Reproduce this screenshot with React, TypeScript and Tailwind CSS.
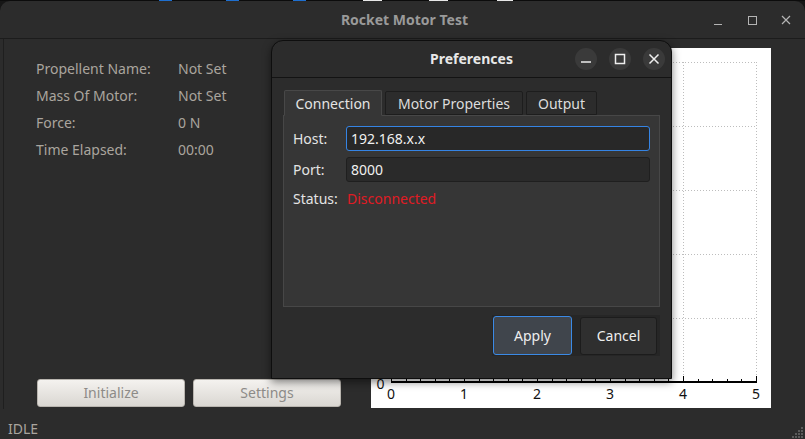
import React from "react";

function Chart() {
  const xs = [0, 1, 2, 3, 4, 5].map((i) => 20 + i * 73);
  const hs = [14, 78, 142, 206, 270];
  const minor: number[] = [];
  for (let i = 0; i < 5; i++) for (let j = 1; j < 5; j++) minor.push(20 + i * 73 + j * 14.6);
  return (
    <svg width="400" height="360" className="block">
      <rect width="400" height="360" fill="#ffffff" />
      {hs.map((y) => (
        <line key={"h" + y} x1={20} x2={386} y1={y + 0.5} y2={y + 0.5} stroke="#bdbdbd" strokeDasharray="1 2" />
      ))}
      {xs.map((x) => (
        <line key={"v" + x} x1={x + 0.5} x2={x + 0.5} y1={14} y2={333} stroke="#bdbdbd" strokeDasharray="1 2" />
      ))}
      <line x1={20.5} x2={20.5} y1={14} y2={335} stroke="#000" />
      <line x1={20} x2={386} y1={334} y2={334} stroke="#000" strokeWidth={2} />
      {xs.map((x) => (
        <line key={"t" + x} x1={x + 0.5} x2={x + 0.5} y1={328} y2={334} stroke="#000" />
      ))}
      {minor.map((x) => (
        <line key={"m" + x} x1={Math.round(x) + 0.5} x2={Math.round(x) + 0.5} y1={331} y2={334} stroke="#000" />
      ))}
      {xs.map((x, i) => (
        <text key={"l" + x} x={x} y={351} textAnchor="middle" fontSize="14" fill="#111" fontFamily="'Noto Sans', sans-serif">
          {i}
        </text>
      ))}
      <text x={9.5} y={341} textAnchor="middle" fontSize="14" fill="#111" fontFamily="'Noto Sans', sans-serif">
        0
      </text>
    </svg>
  );
}

export default function App() {
  const rows: [string, string][] = [
    ["Propellent Name:", "Not Set"],
    ["Mass Of Motor:", "Not Set"],
    ["Force:", "0 N"],
    ["Time Elapsed:", "00:00"],
  ];
  return (
    <div className="relative w-[805px] h-[439px] overflow-hidden bg-[#161616] font-['Noto_Sans',sans-serif] text-[14px] leading-[20px]">
      {/* desktop strip */}
      <div className="flex h-[1px] bg-[#0c0c0c]">
        <div className="w-[159px]" />
        <div className="w-[13px] bg-[#1e6fd0]" />
        <div className="w-[54px]" />
        <div className="w-[13px] bg-[#1e6fd0]" />
        <div className="w-[54px]" />
        <div className="w-[13px] bg-[#1e6fd0]" />
        <div className="w-[57px]" />
        <div className="w-[19px] bg-[#e8e8e8]" />
        <div className="w-[47px]" />
        <div className="w-[19px] bg-[#e8e8e8]" />
        <div className="w-[49px]" />
        <div className="w-[16px] bg-[#e8e8e8]" />
      </div>

      {/* main window */}
      <div className="flex flex-col h-[438px] rounded-t-[10px] bg-[#2c2c2c]">
        <div className="grid grid-cols-[1fr_auto_1fr] items-center h-[38px] border-b border-[#1c1c1c]">
          <div />
          <div className="font-bold text-[#9a9a9a] pl-[4px]">Rocket Motor Test</div>
          <div className="flex justify-end items-center gap-[18px] pr-[11px] text-[#b4b4b4]">
            <svg width="16" height="16" viewBox="0 0 16 16">
              <line x1="4" x2="12" y1="12.5" y2="12.5" stroke="currentColor" strokeWidth="1" />
            </svg>
            <svg width="16" height="16" viewBox="0 0 16 16">
              <rect x="4.5" y="4.5" width="8" height="8" fill="none" stroke="currentColor" strokeWidth="1" />
            </svg>
            <svg width="16" height="16" viewBox="0 0 16 16">
              <path d="M4 4 L12 12 M12 4 L4 12" stroke="currentColor" strokeWidth="1.2" />
            </svg>
          </div>
        </div>

        <div className="flex h-[370px] ml-[3px] border-l border-[#1f1f1f]">
          <div className="w-[367px] flex flex-col justify-between pt-[16px] pb-[2px] text-[#aaa59e]">
            <div className="pl-[32px]">
              {rows.map(([k, v]) => (
                <div key={k} className="flex items-center h-[27px]">
                  <div className="w-[142px]">{k}</div>
                  <div>{v}</div>
                </div>
              ))}
            </div>
            <div className="flex gap-[8px] pl-[33px]">
              <div className="w-[148px] h-[28px] rounded-[3px] border border-[#b9b5af] bg-linear-to-b from-[#f4f2ef] to-[#dad7d2] text-[#8d8b88] flex items-center justify-center">
                Initialize
              </div>
              <div className="w-[148px] h-[28px] rounded-[3px] border border-[#b9b5af] bg-linear-to-b from-[#f4f2ef] to-[#dad7d2] text-[#8d8b88] flex items-center justify-center">
                Settings
              </div>
            </div>
          </div>
          <div className="mt-[9px] w-[400px] h-[360px]">
            <Chart />
          </div>
        </div>

        <div className="flex-1 flex items-end pl-[8px] pb-0 text-[#aaa59e]">IDLE</div>
      </div>

      {/* resize grip */}
      <svg className="absolute right-[2px] bottom-[1px]" width="12" height="12" viewBox="0 0 12 12">
        {[
          [10, 1], [7, 4], [10, 4], [4, 7], [7, 7], [10, 7], [1, 10], [4, 10], [7, 10], [10, 10],
        ].map(([x, y]) => (
          <rect key={x + "-" + y} x={x} y={y} width="2" height="2" fill="#5a5a5a" />
        ))}
      </svg>

      {/* Preferences dialog */}
      <div className="absolute left-[271px] top-[40px] w-[401px] h-[339px] rounded-t-[12px] border border-[#0e0e0e] bg-[#2c2c2c] shadow-[0_3px_8px_rgba(0,0,0,0.5)] flex flex-col">
        <div className="grid grid-cols-[1fr_auto_1fr] items-center h-[37px] border-b border-[#131313] shrink-0">
          <div />
          <div className="font-bold text-[#e8e8e8]">Preferences</div>
          <div className="flex justify-end items-center gap-[12px] pr-[6px] text-[#eeeeee]">
            <div className="w-[22px] h-[22px] rounded-full bg-[#3a3a3a] flex items-center justify-center">
              <svg width="12" height="12" viewBox="0 0 12 12">
                <line x1="1" x2="11" y1="9" y2="9" stroke="currentColor" strokeWidth="1.5" />
              </svg>
            </div>
            <div className="w-[22px] h-[22px] rounded-full bg-[#3a3a3a] flex items-center justify-center">
              <svg width="12" height="12" viewBox="0 0 12 12">
                <rect x="1.5" y="1.5" width="9" height="9" fill="none" stroke="currentColor" strokeWidth="1.5" />
              </svg>
            </div>
            <div className="w-[22px] h-[22px] rounded-full bg-[#3a3a3a] flex items-center justify-center">
              <svg width="12" height="12" viewBox="0 0 12 12">
                <path d="M1.5 1.5 L10.5 10.5 M10.5 1.5 L1.5 10.5" stroke="currentColor" strokeWidth="1.5" />
              </svg>
            </div>
          </div>
        </div>

        <div className="px-[11px] pt-[12px] text-[#e4e4e4]">
          <div className="flex items-end gap-[3px] pl-[1px] relative z-10">
            <div className="w-[98px] h-[26px] -mb-[1px] border border-[#484848] border-b-[#363636] bg-[#363636] rounded-t-[2px] flex items-center justify-center pt-[1px]">
              Connection
            </div>
            <div className="w-[138px] h-[24px] border border-[#1d1d1d] bg-[#2c2c2c] rounded-t-[2px] flex items-center justify-center text-[#dcdcdc] pt-[1px]">
              Motor Properties
            </div>
            <div className="w-[71px] h-[24px] border border-[#1d1d1d] bg-[#2c2c2c] rounded-t-[2px] flex items-center justify-center text-[#dcdcdc] pt-[1px]">
              Output
            </div>
          </div>
          <div className="h-[192px] border border-[#474747] bg-[#363636] pl-[9px] pr-[9px] pt-[10px]">
            <div className="flex items-center">
              <div className="w-[53px] pt-[1px]">Host:</div>
              <div className="flex-1 h-[25px] rounded-[3px] border border-[#3584e4] bg-[#282828] pl-[4px] pt-[1px] flex items-center text-[#f0f0f0]">
                192.168.x.x
              </div>
            </div>
            <div className="flex items-center mt-[6px]">
              <div className="w-[53px] pt-[1px]">Port:</div>
              <div className="flex-1 h-[25px] rounded-[3px] border border-[#1f1f1f] bg-[#2a2a2a] pl-[4px] pt-[1px] flex items-center text-[#f0f0f0]">
                8000
              </div>
            </div>
            <div className="flex items-center mt-[7px] h-[20px]">
              <div className="w-[54px]">Status:</div>
              <div className="text-[#e01b24]">Disconnected</div>
            </div>
          </div>
          <div className="flex justify-end mt-[8px]">
            <div className="flex items-center gap-[8px] bg-[#262626] p-[1px] pr-[3px]">
              <div className="w-[79px] h-[39px] rounded-[3px] border border-[#3b8ae6] bg-[#40454c] flex items-center justify-center text-[#eeeeee]">
                Apply
              </div>
              <div className="w-[77px] h-[38px] rounded-[3px] border border-[#1c1c1c] bg-[#2f2f2f] flex items-center justify-center text-[#eeeeee]">
                Cancel
              </div>
            </div>
          </div>
        </div>
      </div>
    </div>
  );
}
